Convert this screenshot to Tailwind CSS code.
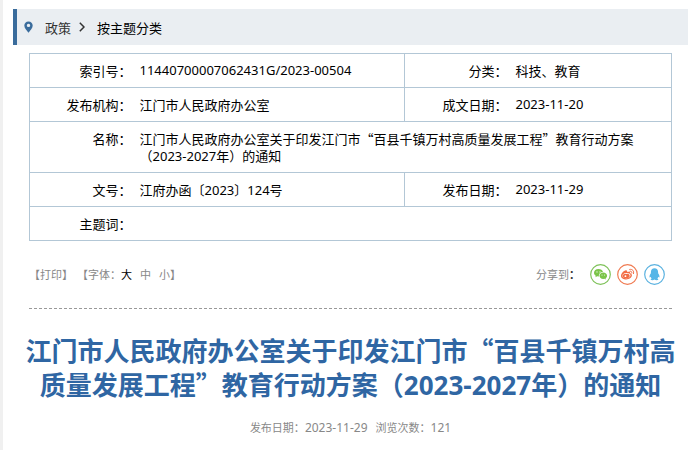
<!DOCTYPE html>
<html lang="zh-CN">
<head>
<meta charset="utf-8">
<meta name="viewport" content="width=device-width, initial-scale=1">
<title>江门市人民政府办公室</title>
<script src="https://cdn.jsdelivr.net/npm/@tailwindcss/browser@4"></script>
</head>
<body class="min-h-screen border-l-3 border-[#f0f0f0] bg-white pt-[9px] pr-[9px] pl-[10px] font-['Noto_Sans_CJK_SC',sans-serif] text-[13px] leading-[17px] text-black">
  <nav aria-label="当前位置" class="flex h-9 items-center border-l-4 border-[#3a6c9c] bg-[#eaeef2] pl-[7px]">
    <svg class="h-3 w-[9px]" viewBox="0 0 9 12" aria-hidden="true"><path fill="#3a6c9c" fill-rule="evenodd" d="M4.500 0.500C2 .5 .3 2.200 .3 4.500C.3 7.200 2.800 9.500 4.500 11.800C6.200 9.500 8.700 7.200 8.700 4.500C8.700 2.200 7 .5 4.500 .5ZM4.500 2.700A1.700 1.700 0 1 1 4.500 6.100A1.700 1.700 0 1 1 4.500 2.700Z"/></svg>
    <a href="#" class="ml-3 text-[#333]">政策</a>
    <svg class="ml-2 h-[10px] w-[6px]" viewBox="0 0 6 10" fill="none" stroke="#333" stroke-width="1.500" aria-hidden="true"><path d="M.8 .8L5 5L.8 9.200"/></svg>
    <a href="#" class="ml-3">按主题分类</a>
  </nav>

  <main class="px-4 pt-2">
    <table class="w-full table-fixed border-collapse border border-[#b3c7d6]">
      <colgroup><col class="w-[102px]"><col><col class="w-[103px]"><col class="w-[164px]"></colgroup>
      <tbody class="align-top">
        <tr class="border border-[#b3c7d6]">
          <th scope="row" class="py-2 text-right font-normal">索引号：</th>
          <td class="py-2 pl-2 font-['Noto_Sans',sans-serif]">11440700007062431G/2023-00504</td>
          <th scope="row" class="border-l border-[#b3c7d6] py-2 text-right font-normal">分类：</th>
          <td class="py-2 pl-2">科技、教育</td>
        </tr>
        <tr class="border border-[#b3c7d6]">
          <th scope="row" class="py-2 text-right font-normal">发布机构：</th>
          <td class="py-2 pl-2">江门市人民政府办公室</td>
          <th scope="row" class="border-l border-[#b3c7d6] py-2 text-right font-normal">成文日期：</th>
          <td class="py-2 pl-2 font-['Noto_Sans',sans-serif]">2023-11-20</td>
        </tr>
        <tr class="border border-[#b3c7d6]">
          <th scope="row" class="py-2 text-right font-normal">名称：</th>
          <td colspan="3" class="py-2 pr-8 pl-2">江门市人民政府办公室关于印发江门市“百县千镇万村高质量发展工程”教育行动方案<br>（<span class="font-['Noto_Sans',sans-serif] leading-none">2023-2027</span>年）的通知</td>
        </tr>
        <tr class="border border-[#b3c7d6]">
          <th scope="row" class="py-2 text-right font-normal">文号：</th>
          <td class="py-2 pl-2">江府办函〔<span class="font-['Noto_Sans',sans-serif] leading-none">2023</span>〕<span class="font-['Noto_Sans',sans-serif] leading-none">124</span>号</td>
          <th scope="row" class="border-l border-[#b3c7d6] py-2 text-right font-normal">发布日期：</th>
          <td class="py-2 pl-2 font-['Noto_Sans',sans-serif]">2023-11-29</td>
        </tr>
        <tr class="border border-[#b3c7d6]">
          <th scope="row" class="py-2 text-right font-normal">主题词：</th>
          <td colspan="3" class="py-2 pl-2"></td>
        </tr>
      </tbody>
    </table>

    <div class="flex h-[68px] items-center justify-between border-b border-dashed border-[#999] text-[11px] text-[#888]">
      <div class="flex items-center">
        <button type="button">【打印】</button>
        <span class="ml-1">【字体：</span>
        <button type="button" class="text-black">大</button>
        <button type="button" class="ml-2">中</button>
        <button type="button" class="ml-2">小</button>
        <span>】</span>
      </div>
      <div class="flex items-center pr-[7px]">
        <span>分享到<b class="text-[#333]">：</b></span>
        <div class="ml-[10px] flex gap-[6px]">
          <a href="#" aria-label="微信"><svg class="size-[21px]" viewBox="0 0 21 21"><circle cx="10.500" cy="10.500" r="9.800" fill="none" stroke="#7fc25a" stroke-width="1.200"/><path fill="#7bc549" d="M8.500 5C5.800 5 4 6.700 4 8.700C4 10 4.700 11 5.800 11.700L5.400 13.200L7.200 12.300L9 12.500C8.400 9.700 10.600 7.900 13 7.900C12.600 6.200 10.700 5 8.500 5Z"/><path fill="#7bc549" d="M13.200 8.500C11 8.500 9.500 9.900 9.500 11.700C9.500 13.500 11.100 14.900 13.200 14.900L14.500 14.700L16 15.500L15.600 14.200C16.500 13.600 17.100 12.800 17.100 11.700C17.100 9.900 15.400 8.500 13.200 8.500Z"/><g fill="#fff"><circle cx="7" cy="7.900" r=".6"/><circle cx="10" cy="7.900" r=".6"/><circle cx="12" cy="11" r=".5"/><circle cx="14.600" cy="11" r=".5"/></g></svg></a>
          <a href="#" aria-label="微博"><svg class="size-[21px]" viewBox="0 0 21 21"><circle cx="10.500" cy="10.500" r="9.800" fill="none" stroke="#f07b52" stroke-width="1.200"/><path fill="#f26d45" fill-rule="evenodd" d="M8.900 6.300C10 6.200 10.400 7 10.100 8.100C11.600 7.500 13.500 7.500 13.100 9.300C14.200 9.700 15 10.300 14.900 11.600C14.700 13.900 12 15.500 9.300 15.500C6.500 15.500 4 14.200 4 12C4 9.500 6.700 6.600 8.900 6.300ZM9.200 9.100C6.800 9.300 5.300 10.500 5.400 12C5.500 13.500 7.300 14.400 9.600 14.200C12 14 13.600 12.700 13.500 11.200C13.400 9.800 11.600 8.900 9.200 9.100Z"/><path fill="#f26d45" fill-rule="evenodd" d="M9.100 9.900A2.600 2.200 0 1 0 9.200 14A2.600 2.200 0 1 0 9.100 9.900ZM8.500 11.300A.9 .9 0 1 1 8.400 13.100A.9 .9 0 1 1 8.500 11.300Z"/><path fill="none" stroke="#f26d45" stroke-linecap="round" d="M12.700 5.400C15.500 4.800 17.300 7 16.500 9.600M13 7.200C14.300 6.900 15.100 7.900 14.800 9"/></svg></a>
          <a href="#" aria-label="QQ"><svg class="size-[21px]" viewBox="0 0 21 21"><circle cx="10.500" cy="10.500" r="9.800" fill="none" stroke="#5bb2e0" stroke-width="1.200"/><path fill="#56b6e7" d="M10.500 4.200C8.300 4.200 6.900 5.800 6.900 8L6.900 9.300C5.900 10.600 5.200 12 5.600 13.600C6 13.700 6.400 13.100 6.700 12.800C6.900 13.500 7.200 14 7.700 14.400C6.900 14.700 6.500 15.100 6.700 15.600C7.200 16.400 9.700 16.200 10.500 15.600C11.300 16.200 13.800 16.400 14.300 15.600C14.500 15.100 14.100 14.700 13.300 14.400C13.800 14 14.100 13.500 14.300 12.800C14.600 13.100 15 13.700 15.400 13.600C15.800 12 15.100 10.600 14.100 9.300L14.100 8C14.100 5.800 12.700 4.200 10.500 4.200Z"/></svg></a>
        </div>
      </div>
    </div>

    <h1 class="-mx-2 mt-6 text-center text-[26px] leading-[34px] font-bold text-[#2f66a3]">江门市人民政府办公室关于印发江门市“百县千镇万村高<br>质量发展工程”教育行动方案（<span class="font-['Noto_Sans',sans-serif] leading-none">2023-2027</span>年）的通知</h1>

    <p class="mt-[18px] flex justify-center gap-2 text-[11px] text-[#888]">
      <span>发布日期：<span class="font-['Noto_Sans',sans-serif] text-[12px] leading-none">2023-11-29</span></span>
      <span>浏览次数：<span class="font-['Noto_Sans',sans-serif] text-[12px] leading-none">121</span></span>
    </p>
  </main>
</body>
</html>
